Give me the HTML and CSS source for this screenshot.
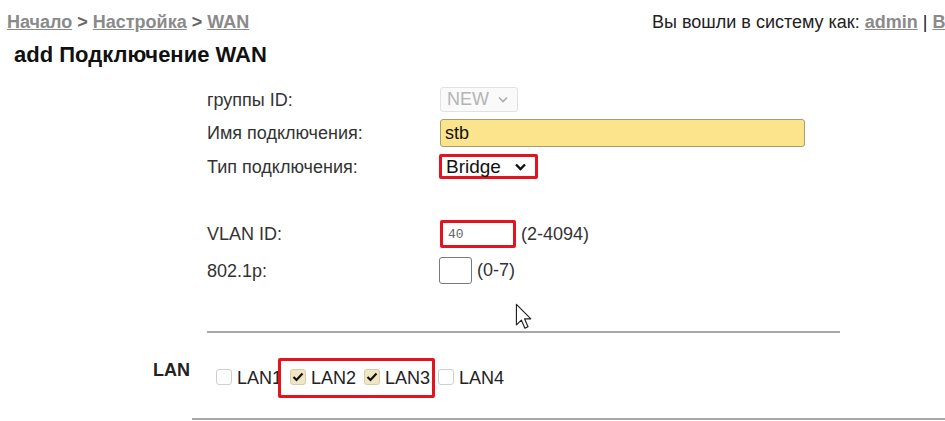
FILE: index.html
```html
<!DOCTYPE html>
<html lang="ru">
<head>
  <meta charset="UTF-8">
  <title>Подключение WAN</title>
  <link rel="stylesheet" href="styles.css">
</head>
<body>
  <div id="topBar">
    <div class="crumbs">
      <a href="#">Начало</a> &gt; <a href="#">Настройка</a> &gt; <a href="#">WAN</a>
    </div>
    <div class="user-info">Вы вошли в систему как: <a href="#">admin</a> | <a href="#">Выход</a></div>
  </div>

  <h3 class="page-title">add Подключение WAN</h3>

  <div class="form-grid">
    <label>группы ID:</label>
    <div class="select select-off">
      NEW
      <svg width="10" height="7" viewBox="0 0 10 7"><path d="M1 1.5 L5 5.5 L9 1.5" fill="none" stroke="#aaa" stroke-width="1.6"/></svg>
    </div>

    <label>Имя подключения:</label>
    <div><input class="form-input name-input" value="stb"></div>

    <label>Тип подключения:</label>
    <div class="select select-mark">
      Bridge
      <svg width="11" height="8" viewBox="0 0 11 8"><path d="M1 1.5 L5.5 6 L10 1.5" fill="none" stroke="#111" stroke-width="2.4"/></svg>
    </div>
  </div>

  <div class="form-grid vlan-grid">
    <label>VLAN ID:</label>
    <div class="field">
      <input class="form-input vlan-input" value="40">
      <span>(2-4094)</span>
    </div>

    <label>802.1p:</label>
    <div class="field">
      <input class="form-input prio-input" value="">
      <span>(0-7)</span>
    </div>
  </div>

  <hr class="divider">

  <div class="lan-row">
    <div class="lan-title">LAN</div>
    <span class="cb-item"><span class="check"></span>LAN1</span>
    <span class="lan-mark">
      <span class="cb-item"><span class="check on"><svg width="12" height="10" viewBox="0 0 12 10"><path d="M1.5 5 L4.5 8 L10.5 1.5" fill="none" stroke="#111" stroke-width="2.2"/></svg></span>LAN2</span>
      <span class="cb-item"><span class="check on"><svg width="12" height="10" viewBox="0 0 12 10"><path d="M1.5 5 L4.5 8 L10.5 1.5" fill="none" stroke="#111" stroke-width="2.2"/></svg></span>LAN3</span>
    </span>
    <span class="cb-item lan4"><span class="check"></span>LAN4</span>
  </div>

  <hr class="divider bottom">

  <svg class="cursor" width="17" height="27" viewBox="-1 -1 13 21">
    <path d="M0 0 L0 16 L3.8 12.3 L6.6 18.6 L9 17.5 L6.3 11.3 L11.2 11.3 Z" fill="#fff" stroke="#222" stroke-width="0.9" stroke-linejoin="round"/>
  </svg>
</body>
</html>
```

FILE: styles.css
```css
body {
  font-family: 'Liberation Sans', Arial, sans-serif;
  background-color: #fff;
  color: #222;
  margin: 0;
  position: relative;
  height: 421px;
  overflow: hidden;
}
a {
  color: #8a8a8a;
  font-weight: bold;
}
#topBar {
  display: grid;
  grid-template-columns: 645px 1fr;
  padding: 12px 0 0 7px;
  font-size: 18px;
  line-height: 20px;
  white-space: nowrap;
}
.crumbs {
  color: #666;
  font-weight: bold;
}
.user-info {
  overflow: hidden;
  color: #222;
}
.page-title {
  font-size: 22px;
  line-height: 26px;
  color: #111;
  margin: 10px 0 0 14px;
}
.form-grid {
  display: grid;
  grid-template-columns: 233px auto;
  row-gap: 7px;
  align-items: center;
  padding-left: 207px;
  margin-top: 19px;
  font-size: 18px;
  color: #333;
}
.form-grid label {
  line-height: 20px;
}
.select {
  display: flex;
  align-items: center;
  justify-content: space-between;
  box-sizing: border-box;
  height: 25px;
  font-size: 18px;
  background-color: #fff;
}
.select-off {
  width: 78px;
  padding: 0 9px 0 6px;
  color: #b4b4b4;
  background-color: #fafafa;
  border: 1px solid #e2e2e2;
  border-radius: 3px;
}
.select-mark {
  width: 99px;
  margin-left: -1px;
  padding: 0 9px 0 4px;
  font-size: 19px;
  color: #111;
  border: 3px solid #e3141d;
  border-radius: 2px;
}
.form-input {
  box-sizing: border-box;
  font-family: 'Liberation Sans', Arial, sans-serif;
  outline: none;
  margin: 0;
}
.name-input {
  width: 365px;
  height: 28px;
  padding: 0 4px;
  font-size: 18px;
  color: #111;
  background-color: #fce48c;
  border: 1px solid #aa9d6f;
  border-radius: 3px;
}
.vlan-grid {
  margin-top: 41px;
  row-gap: 9px;
}
.field {
  display: flex;
  align-items: center;
  gap: 5px;
}
.vlan-input {
  width: 76px;
  height: 28px;
  padding: 0 5px;
  font-family: 'Liberation Mono', monospace;
  font-size: 13px;
  color: #666;
  border: 3px solid #e3141d;
  border-radius: 2px;
}
.prio-input {
  width: 33px;
  height: 27px;
  margin-left: -1px;
  border: 1px solid #7a7a7a;
  border-radius: 3px;
}
.divider {
  border: none;
  border-top: 2px solid #a8a8a8;
  margin: 47px 105px 0 207px;
}
.divider.bottom {
  margin: 20px 0 0 192px;
}
.lan-row {
  display: flex;
  align-items: center;
  padding-left: 153px;
  margin-top: 25px;
  height: 40px;
}
.lan-title {
  align-self: flex-start;
  width: 63px;
  margin-top: 2px;
  font-size: 18px;
  line-height: 20px;
  font-weight: bold;
  color: #222;
}
.cb-item {
  display: inline-flex;
  align-items: center;
  gap: 5px;
  font-size: 18px;
  line-height: 20px;
  color: #222;
}
.check {
  display: inline-flex;
  align-items: center;
  justify-content: center;
  box-sizing: border-box;
  width: 16px;
  height: 16px;
  margin-bottom: 2px;
  border: 1px solid #cfcfcf;
  border-radius: 3px;
  background-color: #fff;
}
.check.on {
  background-color: #f0e6c6;
  border-color: #d8cca4;
}
.lan-mark {
  display: inline-flex;
  align-items: center;
  gap: 8px;
  box-sizing: border-box;
  height: 40px;
  margin-left: -4px;
  padding: 0 2px 0 9px;
  border: 3px solid #e3141d;
  border-radius: 2px;
  background-color: #fff;
}
.lan4 {
  margin-left: 3px;
}
.cursor {
  position: absolute;
  left: 515px;
  top: 303px;
}
```
